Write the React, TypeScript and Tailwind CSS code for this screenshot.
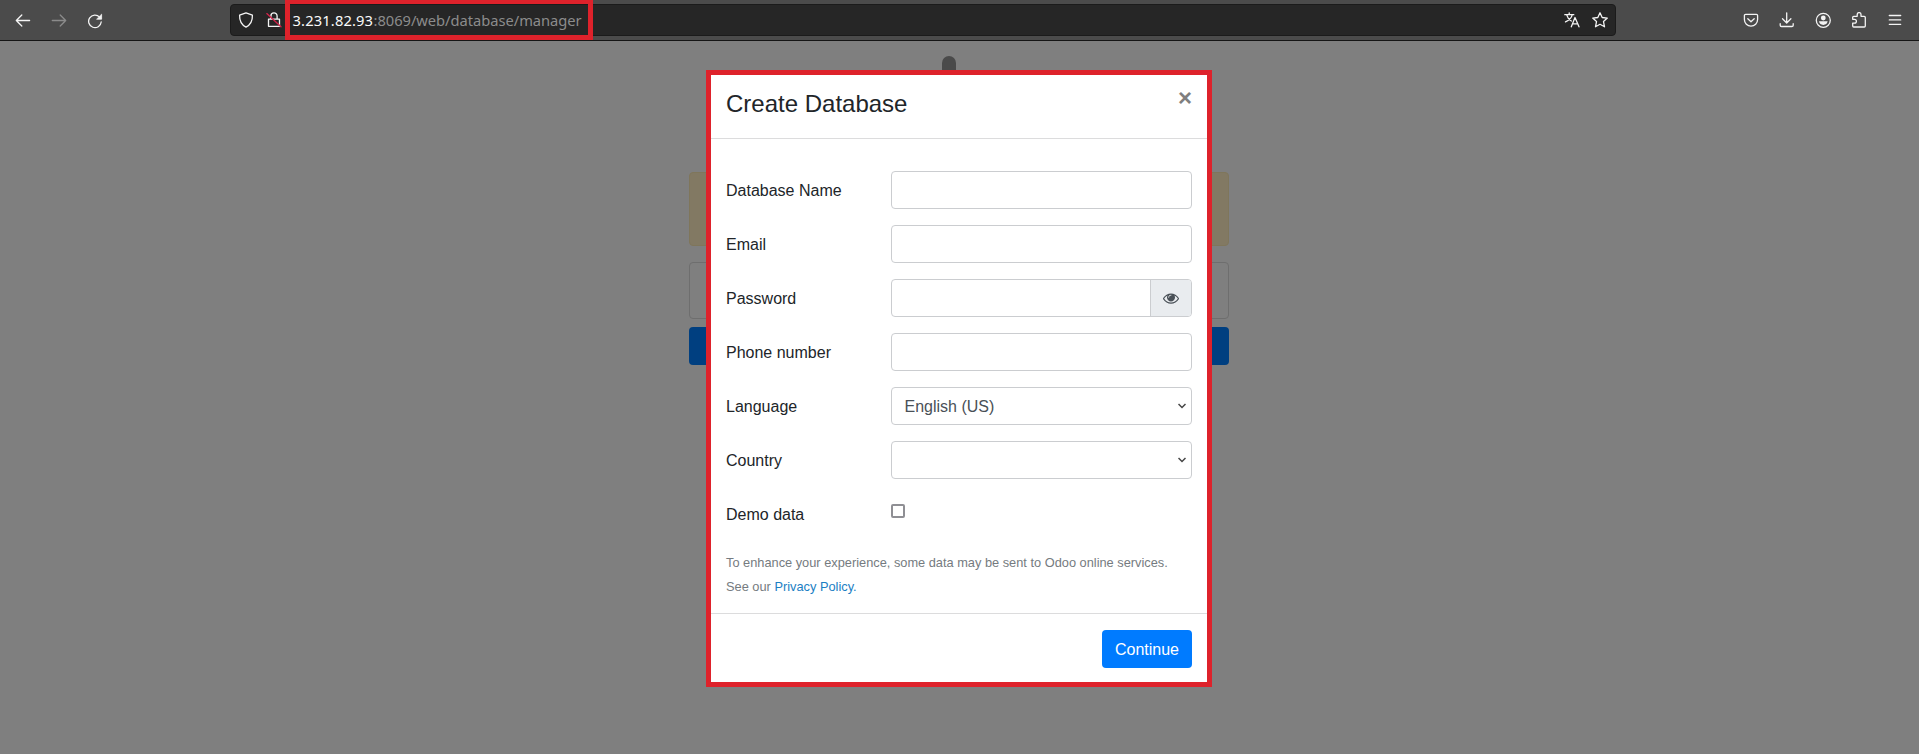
import type { ReactNode } from "react";

function Icon({ children, className = "" }: { children: ReactNode; className?: string }) {
  return (
    <svg
      viewBox="0 0 16 16"
      className={`h-4 w-4 shrink-0 ${className}`}
      fill="none"
      stroke="currentColor"
      strokeWidth="1.3"
      strokeLinecap="round"
      strokeLinejoin="round"
    >
      {children}
    </svg>
  );
}

function Toolbar() {
  return (
    <header className="relative flex h-[41px] items-start border-b border-[#151515] bg-[#4b4b4b] text-[#f4f4f4]">
      <nav className="ml-[15px] mt-[13px] flex gap-5">
        <Icon>
          <path d="M1.3 7.5h13.3M6.8 2 1.3 7.5l5.5 5.5" />
        </Icon>
        <Icon className="text-[#8b8b8b]">
          <path d="M1.3 7.5h13.3M9.2 2l5.5 5.5-5.5 5.5" />
        </Icon>
        <Icon>
          <path d="M12.6 4.1A6.3 6.3 0 1 0 14.2 9" />
          <path d="M14.6 1.6v4.6H10z" fill="currentColor" strokeWidth="0.8" />
        </Icon>
      </nav>

      <div className="ml-[127px] mt-1 flex h-8 w-[1386px] items-center rounded border border-[#1b1b1b] bg-[#262626]">
        <Icon className="ml-[7px]">
          <path d="M8 .9 14.4 3.2c.2 5.2-1.5 9.3-6.4 11.9C3.1 12.5 1.4 8.4 1.6 3.2z" />
        </Icon>
        <Icon className="ml-3">
          <path d="M2.5 7.2h11v7.1h-11zM4.9 7V3.9a3.1 3.1 0 0 1 6.2 0V7" />
          <path d="M.8 1.6 15 14.8" stroke="#d2234a" />
        </Icon>
        <span className="ml-[10.5px] flex whitespace-nowrap font-['Noto_Sans',sans-serif] text-[14.7px] leading-5 text-[#8c8c8c]">
          <span className="w-[81px] tracking-[0.15px] text-[#fafafa]">3.231.82.93</span>
          <span className="tracking-[-0.03px]">:8069/web/database/manager</span>
        </span>
        <div className="ml-auto mr-[7px] flex gap-3">
          <Icon>
            <path d="M.8 2.7h9M5.2.8v1.9M8.3 2.7C7.5 6 4.5 8.6 1.5 9.9M2.7 2.9C3.5 5.9 5.5 8 7.3 9M7.3 14.8l3.7-9.3 4 9.3M8.5 11.9h5.3" />
          </Icon>
          <Icon>
            <path d="m8 .8 2.2 4.7 5.1.6-3.8 3.5 1 5.2L8 12.3l-4.5 2.5 1-5.2L.7 6.1l5.1-.6z" />
          </Icon>
        </div>
      </div>

      <div className="ml-auto mr-4 mt-3 flex gap-5">
        <Icon>
          <path d="M2.6 2.3h10.8a1.2 1.2 0 0 1 1.2 1.2v4a6.6 6.6 0 0 1-13.2 0v-4a1.2 1.2 0 0 1 1.2-1.2zM4.8 6.7l3.2 3 3.2-3" />
        </Icon>
        <Icon>
          <path d="M7.7.8v10M3.5 6.8 7.7 11l4.2-4.2M1.2 11.7v1.5c0 .8.5 1.3 1.3 1.3h10.4c.8 0 1.3-.5 1.3-1.3v-1.5" />
        </Icon>
        <Icon>
          <circle cx="8.3" cy="8.3" r="7" />
          <circle cx="8.3" cy="6" r="2.4" fill="currentColor" stroke="none" />
          <path d="M4 9.3h8.6c-.3 2.2-1.9 3.6-4.3 3.6S4.3 11.5 4 9.3z" fill="currentColor" stroke="none" />
        </Icon>
        <Icon>
          <path d="M2.7 15h10.5c.7 0 1.1-.4 1.1-1.1V5.4c0-.7-.4-1.1-1.1-1.1H10V2.5a1.9 1.9 0 0 0-3.8 0v1.8H2.7c-.6 0-1 .4-1 1v2h1.8a1.9 1.9 0 0 1 0 3.8H1.7v2.9c0 .6.4 1 1 1z" />
        </Icon>
        <Icon>
          <path d="M2.3 3.5h11.4M2.3 7.9h11.4M2.3 12.3h11.4" />
        </Icon>
      </div>

      <div className="absolute left-[285px] top-0 h-10 w-[308px] border-x-[5px] border-b-[5px] border-t-4 border-[#de222b]" />
    </header>
  );
}

function Backdrop() {
  return (
    <main className="ml-[689px] flex w-[540px] flex-col pt-[15px]">
      <div className="ml-[253px] h-[60px] w-[14px] rounded-full bg-[#4a4a4a]" />
      <div className="mt-14 h-[74px] rounded border border-[#7f765b] bg-[#827963]" />
      <div className="mt-4 h-[57px] rounded border border-[#6e6e6e]" />
      <div className="mt-2 h-[38px] rounded bg-[#003f80]" />
    </main>
  );
}

const control = "h-[38px] w-[301px] rounded border border-[#cbcdd0] bg-white";

function Row({ label, children }: { label: string; children: ReactNode }) {
  return (
    <div className="flex h-[54px] items-start">
      <label className="w-[165px] pt-2 leading-6">{label}</label>
      {children}
    </div>
  );
}

function Select({ value }: { value: string }) {
  return (
    <div className={`${control} flex items-center justify-between pl-[12.5px] pr-[5px] text-[#495057]`}>
      <span className="pt-px">{value}</span>
      <svg viewBox="0 0 8 6" className="h-1.5 w-2" fill="none" stroke="#444" strokeWidth="1.5">
        <path d="m.5 1 3.5 3.5L7.5 1" />
      </svg>
    </div>
  );
}

function Dialog() {
  return (
    <section className="absolute left-[706px] top-[70px] flex h-[617px] w-[506px] flex-col border-[5px] border-[#de222b] bg-white font-['Liberation_Sans',Arial,sans-serif] text-base text-[#212529]">
      <div className="flex h-16 items-start justify-between border-b border-[#dcdcdd] px-[15px]">
        <h4 className="mt-[11px] text-2xl leading-9">Create Database</h4>
        <button className="mt-[11px] text-2xl font-bold leading-6 text-[#7f7f7f]">×</button>
      </div>
      <div className="flex h-[474px] flex-col pl-[15px] pt-8">
        <Row label="Database Name">
          <div className={control} />
        </Row>
        <Row label="Email">
          <div className={control} />
        </Row>
        <Row label="Password">
          <div className={`${control} flex justify-end overflow-hidden`}>
            <div className="flex w-[41px] items-center justify-center border-l border-[#cbcdd0] bg-[#e9ecef] text-[#495057]">
              <svg viewBox="0 0 1792 1792" className="h-4 w-4" fill="currentColor">
                <path d="M1664 960q-152-236-381-353 61 104 61 225 0 185-131.5 316.5t-316.5 131.5-316.5-131.5-131.5-316.5q0-121 61-225-229 117-381 353 133 205 333.5 326.5t434.5 121.5 434.5-121.5 333.5-326.5zm-720-384q0-20-14-34t-34-14q-125 0-214.5 89.5t-89.5 214.5q0 20 14 34t34 14 34-14 14-34q0-86 61-147t147-61q20 0 34-14t14-34zm848 384q0 34-20 69-140 230-376.5 368.5t-499.5 138.5-499.5-139-376.5-368q-20-35-20-69t20-69q140-229 376.5-368t499.5-139 499.5 139 376.5 368q20 35 20 69z" />
              </svg>
            </div>
          </div>
        </Row>
        <Row label="Phone number">
          <div className={control} />
        </Row>
        <Row label="Language">
          <Select value="English (US)" />
        </Row>
        <Row label="Country">
          <Select value="" />
        </Row>
        <Row label="Demo data">
          <span className="mt-[9px] h-[14px] w-[14px] rounded-[2px] border-2 border-[#8f8f94] bg-white" />
        </Row>
        <p className="mt-0.5 text-[12.8px] leading-6 text-[#757b80]">
          To enhance your experience, some data may be sent to Odoo online services.
          <br />
          See our <a className="text-[#1b80c4]">Privacy Policy</a>
          <span className="text-[#1b80c4]">.</span>
        </p>
      </div>
      <div className="flex flex-1 items-start justify-end border-t border-[#dcdcdd] pr-[15px] pt-4">
        <button className="h-[38px] w-[90px] rounded bg-[#007bff] pt-0.5 text-white">Continue</button>
      </div>
    </section>
  );
}

export default function App() {
  return (
    <div className="relative h-[754px] w-[1919px] overflow-hidden bg-[#7f7f7f]">
      <Toolbar />
      <Backdrop />
      <Dialog />
    </div>
  );
}
